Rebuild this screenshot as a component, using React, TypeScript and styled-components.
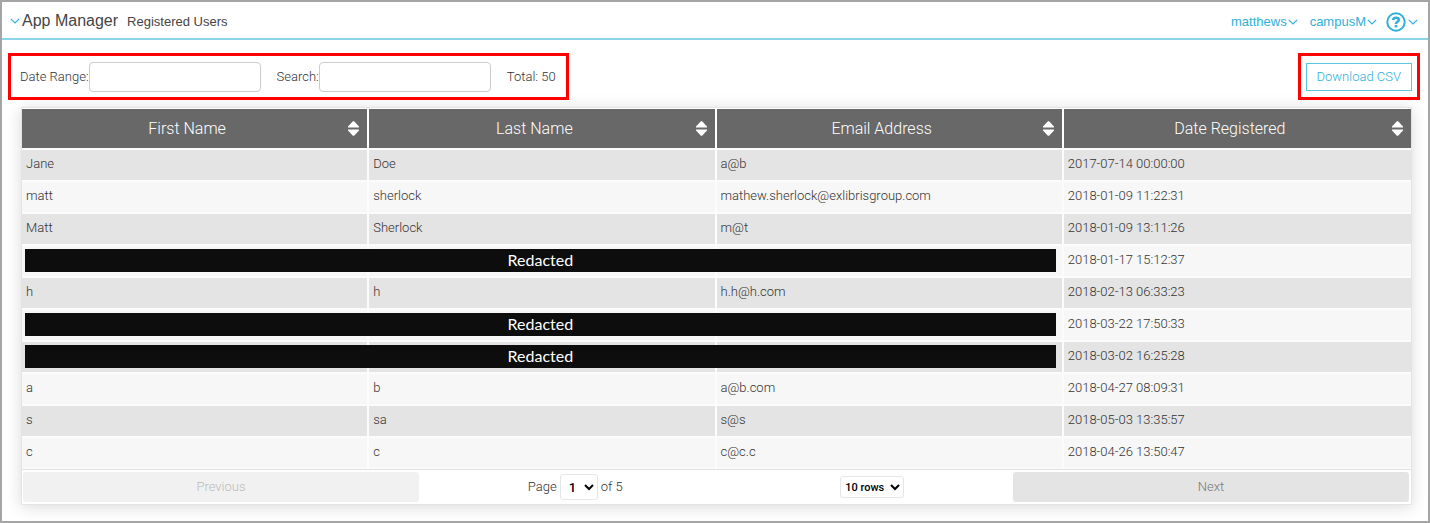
import React from "react";
import styled, { createGlobalStyle } from "styled-components";

const GlobalStyle = createGlobalStyle`
  *, *::before, *::after { box-sizing: border-box; }
  body {
    margin: 0;
    background: #fff;
    color: #333;
    font: 300 13px/16px Roboto, "Liberation Sans", sans-serif;
  }
  button, input, select { font: inherit; color: inherit; margin: 0; }
`;

const Page = styled.div`
  min-height: 100vh;
  border: 2px solid #a5a5a5;
`;

const Header = styled.header`
  display: flex;
  align-items: center;
  justify-content: space-between;
  height: 38px;
  padding: 2px 10px 0 8px;
  border-bottom: 2px solid #8bd5ea;
  color: #444;
  font-family: "Liberation Sans", Arial, sans-serif;
  font-weight: 400;
`;

const Titles = styled.div`
  display: flex;
  align-items: center;
  gap: 9px;
`;

const AppTitle = styled.h1`
  display: flex;
  align-items: center;
  gap: 2px;
  margin: 0;
  font-size: 16px;
  line-height: 20px;
  font-weight: 400;
`;

const PageTitle = styled.h2`
  margin: 0;
  padding-top: 2px;
  font-size: 13px;
  font-weight: 400;
`;

const Menus = styled.nav`
  display: flex;
  align-items: center;
  gap: 12px;
  padding-top: 2px;
`;

const MenuButton = styled.button`
  display: flex;
  align-items: center;
  gap: 1px;
  padding: 0;
  border: 0;
  background: none;
  color: #2fb0d8;
`;

const HelpButton = styled(MenuButton)`
  gap: 2px;
  margin-left: -3px;
`;

const Toolbar = styled.div`
  display: flex;
  justify-content: space-between;
  align-items: flex-start;
  padding: 13px 8px 0 6px;
`;

const Highlight = styled.div`
  display: flex;
  align-items: center;
  gap: 16px;
  height: 47px;
  padding: 1px 10px 0 9px;
  border: 3px solid #f00;
`;

const DownloadHighlight = styled(Highlight)`
  padding: 1px 5px 0;
`;

const Field = styled.label`
  display: flex;
  align-items: center;
`;

const TextBox = styled.input`
  width: 172px;
  height: 30px;
  padding: 0 8px;
  border: 1px solid #ccc;
  border-radius: 4px;
  background: #fff;
`;

const DownloadButton = styled.button`
  height: 28px;
  padding: 0 10px;
  border: 1px solid #5cc6e2;
  background: #fff;
  color: #2fb0d8;
`;

const Grid = styled.section`
  margin: 7px 16px 14px 19px;
  border: 1px solid #e4e4e4;
  box-shadow: 0 2px 15px rgba(0, 0, 0, 0.15);
  background: #fff;
`;

const Table = styled.table`
  width: 100%;
  table-layout: fixed;
  border-collapse: separate;
  border-spacing: 0;
`;

const HeadCell = styled.th`
  height: 41px;
  padding: 0 8px 0 4px;
  border: solid #fff;
  border-width: 1px 2px 1px 0;
  background: #686868;
  background-clip: padding-box;
  color: #fff;
  font-weight: 300;

  &:last-child { border-right-width: 0; }
`;

const SortButton = styled.button`
  display: flex;
  align-items: center;
  width: 100%;
  padding: 0;
  border: 0;
  background: none;
  font-size: 16px;
  line-height: 20px;

  span { flex: 1; }
`;

const Row = styled.tr`
  background: #f7f7f7;

  &:nth-child(odd) { background: #e4e4e4; }
`;

const Cell = styled.td`
  position: relative;
  height: 32px;
  padding: 0 4px 2px;
  border: solid #fcfcfc;
  border-width: 1px 2px 1px 0;

  &:last-child { border-right-width: 0; }
`;

const Redaction = styled.div`
  position: absolute;
  z-index: 1;
  top: 3px;
  left: 3px;
  width: calc(300% - 5px);
  height: 23px;
  background: #0d0d0d;
  color: #fff;
  font: 400 16px/22px Lato, sans-serif;
  text-align: center;
`;

const Pager = styled.footer`
  display: grid;
  grid-template-columns: 2fr 3fr 2fr;
  align-items: center;
  padding: 2px 2px 2px 1px;
  border-top: 1px solid #e0e0e0;
`;

const PageButton = styled.button`
  height: 30px;
  border: 0;
  border-radius: 3px;
  background: #e4e4e4;
  color: #777;

  &:disabled { background: #f1f1f1; color: #bbb; }
`;

const PagerCenter = styled.div`
  display: flex;
  align-items: center;
  justify-content: space-around;
`;

const PageChoice = styled.div`
  display: flex;
  align-items: center;
  gap: 3px;
`;

const PageSelect = styled.select`
  width: 38px;
  height: 26px;
  padding: 0 0 0 4px;
  border: 1px solid #e6e6e6;
  border-radius: 3px;
  background: #fff;
  color: #000;
  font-weight: 500;
`;

const RowsSelect = styled(PageSelect)`
  width: 64px;
  height: 22px;
  padding: 0;
  font-size: 11px;
`;

const Chevron = () => (
  <svg width="10" height="6" viewBox="0 0 10 6" fill="none" stroke="#2fb0d8" strokeWidth="1.2" aria-hidden="true">
    <path d="M.8.8 5 5 9.2.8" />
  </svg>
);

const SortIcon = () => (
  <svg width="11" height="15" viewBox="0 0 11 15" fill="#fff" aria-hidden="true">
    <path d="M4.9.3h1.2L11 5.4v1.1H0V5.4zM0 8.5h11v1.1l-4.9 5.1H4.9L0 9.6z" />
  </svg>
);

const HelpIcon = () => (
  <svg width="20" height="20" viewBox="0 0 20 20" fill="none" stroke="#2fb0d8" aria-hidden="true">
    <circle cx="10" cy="10" r="8.7" strokeWidth="2" />
    <path d="M7 8C7.4 6.5 8.5 5.8 10 5.8c1.7 0 2.8 1 2.8 2.2 0 1.8-2.8 1.8-2.8 3.9" strokeWidth="2.5" />
    <path d="M8.7 12.9h2.6v2.5H8.7z" fill="#2fb0d8" stroke="none" />
  </svg>
);

const columns = ["First Name", "Last Name", "Email Address", "Date Registered"];

type User = { person: [string, string, string] | null; date: string };

const users: User[] = [
  { person: ["Jane", "Doe", "a@b"], date: "2017-07-14 00:00:00" },
  { person: ["matt", "sherlock", "mathew.sherlock@exlibrisgroup.com"], date: "2018-01-09 11:22:31" },
  { person: ["Matt", "Sherlock", "m@t"], date: "2018-01-09 13:11:26" },
  { person: null, date: "2018-01-17 15:12:37" },
  { person: ["h", "h", "h.h@h.com"], date: "2018-02-13 06:33:23" },
  { person: null, date: "2018-03-22 17:50:33" },
  { person: null, date: "2018-03-02 16:25:28" },
  { person: ["a", "b", "a@b.com"], date: "2018-04-27 08:09:31" },
  { person: ["s", "sa", "s@s"], date: "2018-05-03 13:35:57" },
  { person: ["c", "c", "c@c.c"], date: "2018-04-26 13:50:47" },
];

export default function App() {
  return (
    <Page>
      <GlobalStyle />
      <Header>
        <Titles>
          <AppTitle><Chevron />App Manager</AppTitle>
          <PageTitle>Registered Users</PageTitle>
        </Titles>
        <Menus>
          <MenuButton type="button">matthews<Chevron /></MenuButton>
          <MenuButton type="button">campusM<Chevron /></MenuButton>
          <HelpButton type="button" aria-label="Help"><HelpIcon /><Chevron /></HelpButton>
        </Menus>
      </Header>
      <main>
        <Toolbar>
          <Highlight>
            <Field>Date Range:<TextBox type="text" /></Field>
            <Field>Search:<TextBox type="text" /></Field>
            <span>Total: 50</span>
          </Highlight>
          <DownloadHighlight>
            <DownloadButton type="button">Download CSV</DownloadButton>
          </DownloadHighlight>
        </Toolbar>
        <Grid>
          <Table>
            <thead>
              <tr>
                {columns.map((name) => (
                  <HeadCell key={name} scope="col">
                    <SortButton type="button"><span>{name}</span><SortIcon /></SortButton>
                  </HeadCell>
                ))}
              </tr>
            </thead>
            <tbody>
              {users.map(({ person, date }) => (
                <Row key={date}>
                  {person ? (
                    person.map((value, i) => <Cell key={i}>{value}</Cell>)
                  ) : (
                    <>
                      <Cell><Redaction>Redacted</Redaction></Cell>
                      <Cell />
                      <Cell />
                    </>
                  )}
                  <Cell>{date}</Cell>
                </Row>
              ))}
            </tbody>
          </Table>
          <Pager>
            <PageButton type="button" disabled>Previous</PageButton>
            <PagerCenter>
              <PageChoice>
                <label htmlFor="page">Page</label>
                <PageSelect id="page" defaultValue="1">
                  {[1, 2, 3, 4, 5].map((n) => <option key={n}>{n}</option>)}
                </PageSelect>
                <span>of 5</span>
              </PageChoice>
              <RowsSelect aria-label="Rows per page" defaultValue="10 rows">
                {[5, 10, 20, 50].map((n) => <option key={n}>{`${n} rows`}</option>)}
              </RowsSelect>
            </PagerCenter>
            <PageButton type="button">Next</PageButton>
          </Pager>
        </Grid>
      </main>
    </Page>
  );
}
